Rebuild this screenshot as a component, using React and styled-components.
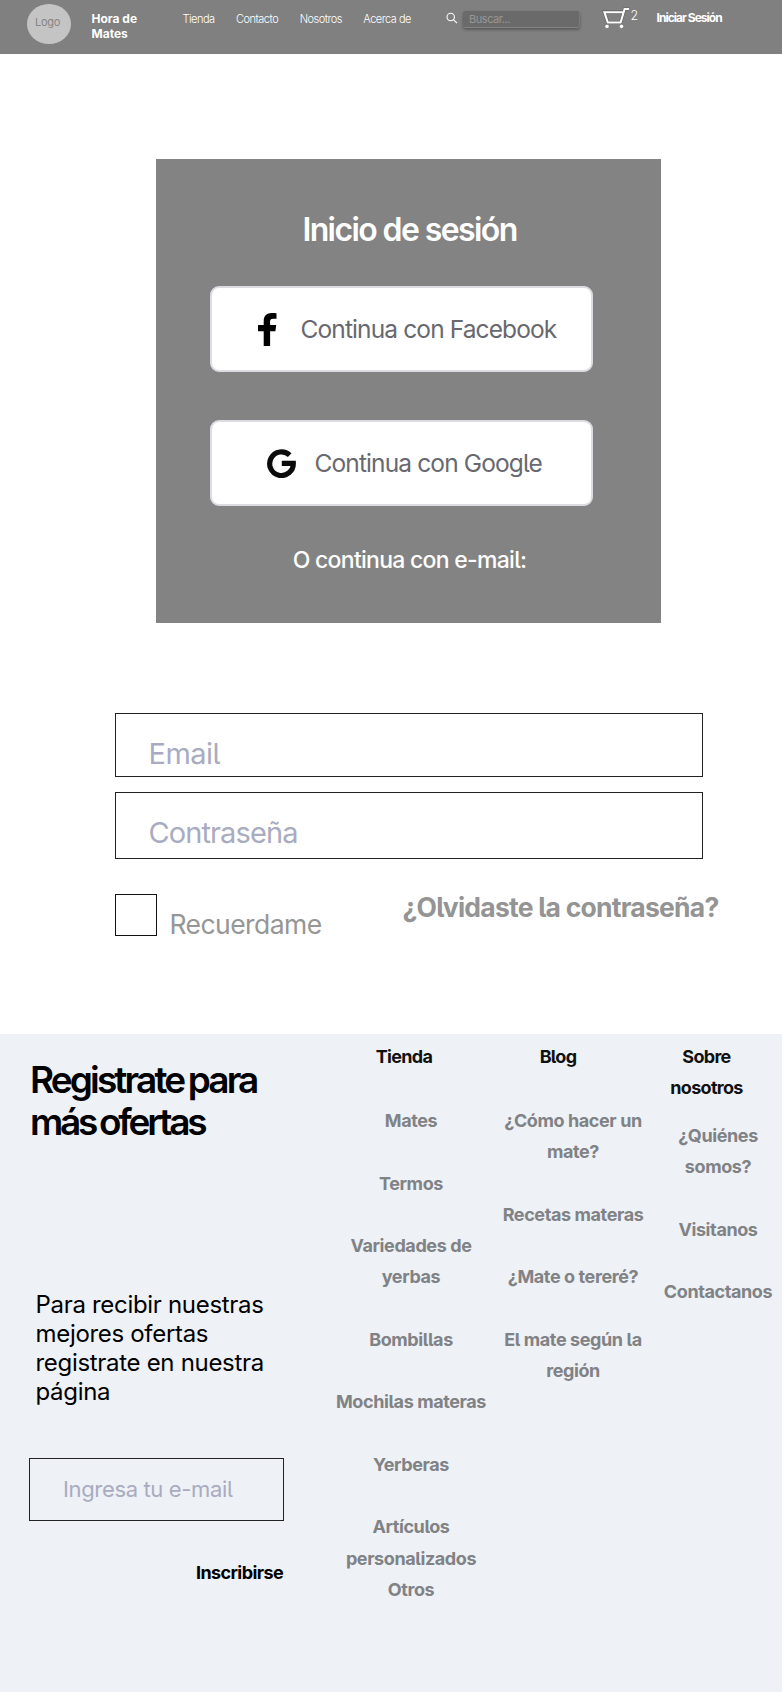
import React from 'react';
import styled, { createGlobalStyle } from 'styled-components';

const GlobalStyle = createGlobalStyle`
  * { box-sizing: border-box; }
  body { margin: 0; background: #fff; }
  h1, h2, h3, p, ul { margin: 0; padding: 0; font-size: inherit; font-weight: inherit; }
`;

const Page = styled.div`
  width: 782px;
  height: 1692px;
  overflow: hidden;
  display: flex;
  flex-direction: column;
  font-family: Inter, 'Liberation Sans', sans-serif;
  font-feature-settings: 'cv05';
  white-space: nowrap;
`;

const Header = styled.header`
  height: 54px;
  flex: none;
  background: #808080;
  color: #fff;
  display: flex;
  align-items: flex-start;
  font-feature-settings: normal;
`;

const Logo = styled.div`
  width: 44px;
  height: 40px;
  margin: 4px 0 0 27px;
  padding-left: 8px;
  border-radius: 50%;
  background: #c4c4c4;
  color: #858585;
  font-size: 11px;
  line-height: 36px;
  letter-spacing: -0.3px;
`;

const Brand = styled.div`
  width: 91px;
  margin: 12px 0 0 20.5px;
  font-size: 12px;
  font-weight: 700;
  line-height: 14.5px;
  letter-spacing: 0;
`;

const Nav = styled.nav`
  width: 263.5px;
  display: flex;
  gap: 21.4px;
  padding-top: 12px;
  font-size: 11px;
  font-weight: 300;
  line-height: 14px;
  letter-spacing: -0.5px;
`;

const SearchIcon = styled.svg`
  width: 12px;
  height: 12px;
  margin: 12px 5px 0 0;
`;

const SearchBox = styled.div`
  width: 117px;
  height: 17px;
  margin: 11px 20px 0 0;
  padding-left: 6px;
  border-radius: 3px;
  background: #6a6a6a;
  border-right: 1px solid #7c7c7c;
  border-bottom: 1px solid #858585;
  box-shadow: 0 2px 3px rgba(0, 0, 0, 0.28), 0 0 2px rgba(0, 0, 0, 0.12);
  color: #979797;
  font-size: 11px;
  line-height: 16px;
  letter-spacing: -0.45px;
`;

const CartIcon = styled.svg`
  width: 30px;
  height: 26px;
  margin-top: 5px;
`;

const CartCount = styled.span`
  width: 26px;
  margin: 8px 0 0 0.5px;
  font-size: 12.5px;
  font-weight: 300;
  line-height: 15px;
`;

const SessionLink = styled.span`
  margin-top: 10px;
  font-size: 12px;
  font-weight: 700;
  line-height: 15px;
  letter-spacing: -0.98px;
`;

const Card = styled.section`
  width: 505px;
  height: 464px;
  flex: none;
  margin: 105px 0 0 156px;
  padding: 51px 0 0 54px;
  background: #838383;
  color: #fff;
`;

const CardTitle = styled.h1`
  width: 399px;
  text-align: center;
  font-size: 32px;
  font-weight: 600;
  line-height: 40px;
  letter-spacing: -1.6px;
`;

const SocialButton = styled.div`
  width: 383px;
  height: 86px;
  margin-top: ${(p) => p.$top}px;
  padding: 0 0 0 ${(p) => p.$left}px;
  display: flex;
  align-items: center;
  gap: ${(p) => p.$gap}px;
  border: 2px solid #dcdce3;
  border-radius: 9px;
  background: #fff;
  color: #68686f;
  font-size: 24.5px;
  letter-spacing: -0.88px;
`;

const CardNote = styled.p`
  width: 399px;
  margin-top: 37px;
  text-align: center;
  font-size: 23px;
  font-weight: 500;
  line-height: 34px;
  letter-spacing: -0.72px;
`;

const Field = styled.div`
  width: ${(p) => p.$width}px;
  height: ${(p) => p.$height}px;
  margin-top: ${(p) => p.$top}px;
  padding-left: ${(p) => p.$left}px;
  border: 1px solid #222;
  color: #a9abc0;
  font-size: ${(p) => p.$size}px;
  line-height: ${(p) => p.$line}px;
  letter-spacing: ${(p) => p.$spacing}px;
`;

const LoginForm = styled.section`
  flex: none;
  height: 410.5px;
  padding: 90px 0 0 115px;
`;

const Options = styled.div`
  display: flex;
  align-items: flex-start;
  margin-top: 35px;
`;

const Checkbox = styled.div`
  width: 42px;
  height: 42px;
  border: 1px solid #111;
`;

const Remember = styled.span`
  width: 233px;
  margin: 13px 0 0 12.5px;
  color: #969696;
  font-size: 26.5px;
  line-height: 34px;
  letter-spacing: -0.55px;
`;

const Forgot = styled.span`
  margin-top: -4px;
  color: #949494;
  font-size: 26.5px;
  font-weight: 700;
  line-height: 34px;
  letter-spacing: -0.77px;
`;

const Footer = styled.footer`
  flex: 1;
  display: flex;
  align-items: flex-start;
  background: #eef1f6;
`;

const Signup = styled.section`
  width: 255px;
  margin-left: 29px;
  padding-top: 25px;
`;

const SignupTitle = styled.h2`
  padding-left: 1px;
  font-size: 37px;
  font-weight: 600;
  line-height: 42px;
  word-spacing: -2px;
`;

const TitleLine = styled.span`
  display: block;
  letter-spacing: ${(p) => p.$spacing}px;
`;

const SignupText = styled.p`
  margin-top: 147px;
  padding-left: 6.5px;
  font-size: 24px;
  line-height: 29.1px;
  letter-spacing: -0.31px;
`;

const Submit = styled.div`
  margin-top: 41px;
  padding-right: 1px;
  text-align: right;
  font-size: 18px;
  font-weight: 700;
  line-height: 22px;
  letter-spacing: -0.6px;
`;

const Column = styled.div`
  width: ${(p) => p.$width}px;
  margin-left: ${(p) => p.$left}px;
  padding-top: 7px;
  text-align: center;
  font-size: 18px;
  font-weight: 700;
  line-height: 31.25px;
`;

const ColumnTitle = styled.h3`
  padding-right: ${(p) => p.$shift}px;
  margin-bottom: ${(p) => p.$bottom}px;
  color: #111;
  letter-spacing: -0.7px;
`;

const Links = styled.ul`
  list-style: none;
  display: flex;
  flex-direction: column;
  color: #808285;
  letter-spacing: -0.4px;
`;

const LinkItem = styled.li`
  margin-bottom: ${(p) => (p.$tight ? 0 : 31.25)}px;
`;

export default function App() {
  return (
    <Page>
      <GlobalStyle />
      <Header>
        <Logo>Logo</Logo>
        <Brand>Hora de<br />Mates</Brand>
        <Nav>
          <span>Tienda</span>
          <span>Contacto</span>
          <span>Nosotros</span>
          <span>Acerca de</span>
        </Nav>
        <SearchIcon viewBox="0 0 12 12" fill="none" stroke="#fff" strokeWidth="1.1">
          <circle cx="4.7" cy="5" r="3.7" />
          <path d="M7.4 7.7 11 11.2" />
        </SearchIcon>
        <SearchBox>Buscar...</SearchBox>
        <CartIcon viewBox="0 0 30 26" fill="none">
          <g stroke="#5c5c5c" strokeWidth="3.2">
            <path d="M29 4H24.6L20.6 17.5H7.8L4.4 7.2H23" />
          </g>
          <path d="M29 4H24.6L20.6 17.5H7.8L4.4 7.2H23" stroke="#fff" strokeWidth="2.1" />
          <g fill="#fff" stroke="#5c5c5c" strokeWidth="0.6">
            <circle cx="7" cy="21.4" r="2.2" />
            <circle cx="21.5" cy="21.4" r="2.2" />
          </g>
        </CartIcon>
        <CartCount>2</CartCount>
        <SessionLink>Iniciar Sesión</SessionLink>
      </Header>

      <Card>
        <CardTitle>Inicio de sesión</CardTitle>
        <SocialButton $top={36} $left={45.5} $gap={24}>
          <svg width="19" height="33" viewBox="0 0 19 33" fill="#000">
            <path d="M5.7 33V18.3H0V12h5.7V8.2C5.7 2.7 8.8 0 13.6 0c2.3 0 4.4.2 4.9.3v5.5h-3.3c-2.5 0-3.1 1.2-3.1 3V12h6.1l-.8 6.3h-5.3V33z" />
          </svg>
          Continua con Facebook
        </SocialButton>
        <SocialButton $top={48} $left={55} $gap={18.5}>
          <svg width="29" height="29" viewBox="0 0 29 29" fill="none" stroke="#0b0b0b" strokeWidth="5.2">
            <path d="M22.7 6.2A11.8 11.8 0 1 0 26.3 14.3H14.8" />
          </svg>
          Continua con Google
        </SocialButton>
        <CardNote>O continua con e-mail:</CardNote>
      </Card>

      <LoginForm>
        <Field $width={588} $height={64} $top={0} $left={32.5} $size={29} $line={80} $spacing={-0.55}>Email</Field>
        <Field $width={588} $height={67} $top={15} $left={32.5} $size={29} $line={80} $spacing={-0.9}>Contraseña</Field>
        <Options>
          <Checkbox />
          <Remember>Recuerdame</Remember>
          <Forgot>¿Olvidaste la contraseña?</Forgot>
        </Options>
      </LoginForm>

      <Footer>
        <Signup>
          <SignupTitle>
            <TitleLine $spacing={-2.87}>Registrate para</TitleLine>
            <TitleLine $spacing={-3.28}>más ofertas</TitleLine>
          </SignupTitle>
          <SignupText>Para recibir nuestras<br />mejores ofertas<br />registrate en nuestra<br />página</SignupText>
          <Field $width={255} $height={63} $top={52} $left={33} $size={22} $line={60} $spacing={-0.35}>Ingresa tu e-mail</Field>
          <Submit>Inscribirse</Submit>
        </Signup>
        <Column $width={154} $left={50}>
          <ColumnTitle $shift={14} $bottom={33.3}>Tienda</ColumnTitle>
          <Links>
            <LinkItem>Mates</LinkItem>
            <LinkItem>Termos</LinkItem>
            <LinkItem>Variedades de<br />yerbas</LinkItem>
            <LinkItem>Bombillas</LinkItem>
            <LinkItem>Mochilas materas</LinkItem>
            <LinkItem>Yerberas</LinkItem>
            <LinkItem $tight>Artículos<br />personalizados</LinkItem>
            <LinkItem $tight>Otros</LinkItem>
          </Links>
        </Column>
        <Column $width={146} $left={12}>
          <ColumnTitle $shift={30} $bottom={33.3}>Blog</ColumnTitle>
          <Links>
            <LinkItem>¿Cómo hacer un<br />mate?</LinkItem>
            <LinkItem>Recetas materas</LinkItem>
            <LinkItem>¿Mate o tereré?</LinkItem>
            <LinkItem>El mate según la<br />región</LinkItem>
          </Links>
        </Column>
        <Column $width={112} $left={16}>
          <ColumnTitle $shift={23} $bottom={16.8}>Sobre<br />nosotros</ColumnTitle>
          <Links>
            <LinkItem>¿Quiénes<br />somos?</LinkItem>
            <LinkItem>Visitanos</LinkItem>
            <LinkItem>Contactanos</LinkItem>
          </Links>
        </Column>
      </Footer>
    </Page>
  );
}
